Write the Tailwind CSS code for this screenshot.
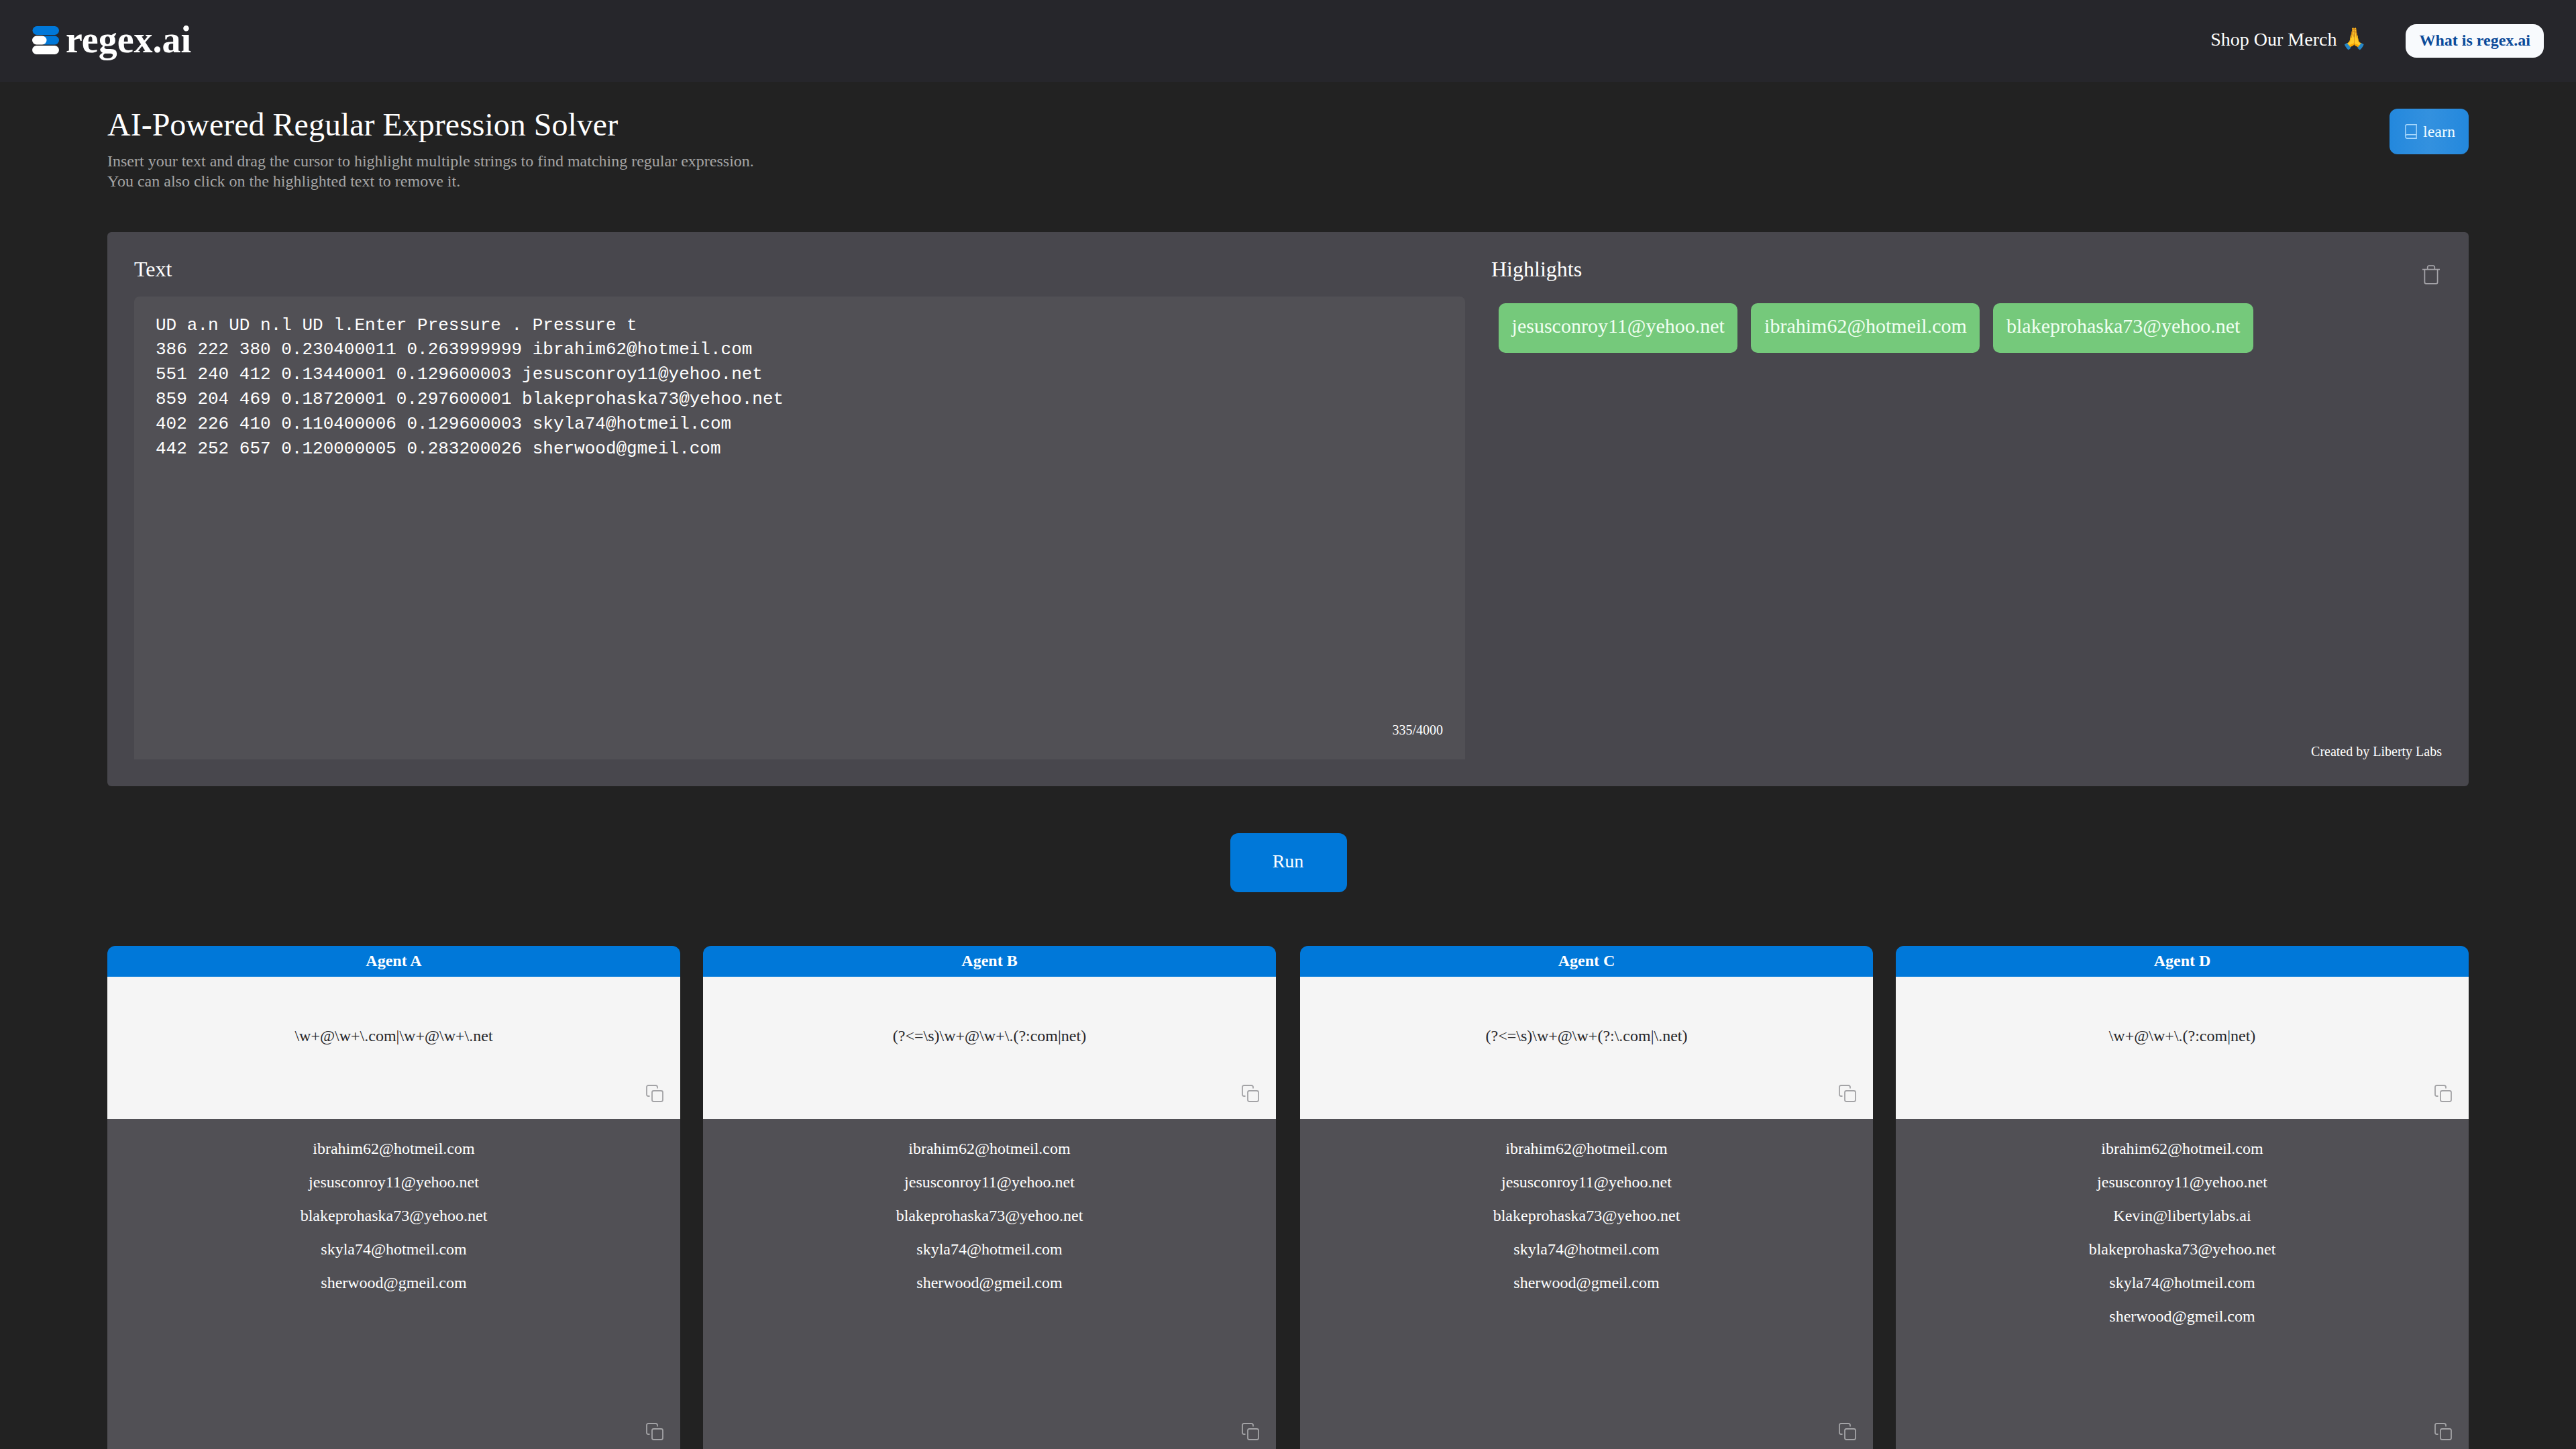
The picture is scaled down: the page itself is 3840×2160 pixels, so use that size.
<!DOCTYPE html>
<html lang="en">
<head>
  <meta charset="UTF-8">
  <title>regex.ai</title>
  <meta name="viewport" content="width=device-width, initial-scale=1.0">
  <script src="https://cdn.jsdelivr.net/npm/@tailwindcss/browser@4"></script>
</head>
<body class="bg-[#222222] text-white font-['Liberation_Serif',serif] h-[2160px] overflow-hidden">

  <!-- Navbar -->
  <header class="h-[122px] bg-[#26262b] flex items-center justify-between px-12">
    <div class="flex items-center gap-[10px]">
      <svg class="w-10 h-[42px] -mt-0.5" viewBox="0 0 40 42">
        <rect x="0.5" y="0" width="39.5" height="13" rx="6.5" fill="#0078d9"/>
        <rect x="12" y="14.5" width="28" height="13" rx="6.5" fill="#0078d9"/>
        <rect x="0" y="14.5" width="21.5" height="13" rx="6.5" fill="#fff"/>
        <rect x="0" y="29" width="40" height="13" rx="6.5" fill="#fff"/>
      </svg>
      <span class="text-[56px] leading-[56px] font-bold pb-1">regex.ai</span>
    </div>
    <div class="flex items-center gap-[57px]">
      <a class="text-[28px] leading-8 pb-[5px]">Shop Our Merch <span class="text-[31px] leading-none">🙏</span></a>
      <button class="h-[50px] px-5 pb-0.5 rounded-2xl bg-[#f8fafd] text-[#0b4a99] text-2xl leading-6 font-bold">What is regex.ai</button>
    </div>
  </header>

  <main class="px-40 pt-[34px]">
    <div class="flex justify-between items-start h-[190px]">
      <div>
        <h1 class="text-5xl leading-[60px]">AI-Powered Regular Expression Solver</h1>
        <p class="mt-[9px] text-2xl leading-[30px] text-[#a5a5a5]">
          Insert your text and drag the cursor to highlight multiple strings to find matching regular expression.<br>
          You can also click on the highlighted text to remove it.
        </p>
      </div>
      <button class="mt-1.5 w-[118px] h-[68px] pl-[3px] rounded-xl bg-linear-to-r from-[#2388dd] via-[#3391df] to-[#2388dd] flex items-center justify-center gap-[9px] text-2xl leading-6 text-[#eefaff]">
        <svg class="w-[18px] h-[22px]" viewBox="0 0 18 22" fill="none" stroke="#a9d8fb" stroke-width="1.4">
          <path d="M17.2 15.8V.8H3.2A2.4 2.4 0 0 0 .8 3.2v15.6a2.4 2.4 0 0 0 2.4 2.4h14v-5.4H3.2a2.4 2.4 0 0 0-2.4 2.4"/>
        </svg>
        learn
      </button>
    </div>

    <!-- Editor panel -->
    <section class="h-[826px] rounded-md bg-[#48474d] pl-10 pr-10 pt-[35px] pb-10 flex gap-[39px]">
      <div class="w-[1984px] flex flex-col">
        <h2 class="text-[32px] leading-10">Text</h2>
        <div class="mt-[21px] flex-1 rounded-t-lg bg-[#515055] px-8 pt-[24.6px] pb-8 flex flex-col justify-between">
          <pre class="font-['Liberation_Mono',monospace] text-[26px] leading-[36.8px]">UD a.n UD n.l UD l.Enter Pressure . Pressure t
386 222 380 0.230400011 0.263999999 ibrahim62@hotmeil.com
551 240 412 0.13440001 0.129600003 jesusconroy11@yehoo.net
859 204 469 0.18720001 0.297600001 blakeprohaska73@yehoo.net
402 226 410 0.110400006 0.129600003 skyla74@hotmeil.com
442 252 657 0.120000005 0.283200026 sherwood@gmeil.com</pre>
          <div class="pr-px text-right text-xl leading-6">335/4000</div>
        </div>
      </div>
      <div class="flex-1 flex flex-col">
        <div class="flex justify-between items-start">
          <h2 class="text-[32px] leading-10">Highlights</h2>
          <svg class="w-[26px] h-[29px] mt-[14px] mr-[3px]" viewBox="0 0 26 29" fill="none" stroke="#a6a5aa" stroke-width="1.7">
            <path d="M0 6.6h26M3.4 6.6v19.2a2 2 0 0 0 2 2h15.2a2 2 0 0 0 2-2V6.6M7.7 6.6V3.4a2.2 2.2 0 0 1 2.2-2.2h6.2a2.2 2.2 0 0 1 2.2 2.2v3.2"/>
          </svg>
        </div>
        <div class="mt-[28px] ml-[11px] flex gap-5 text-[30px] text-[#f0fff2]">
          <span class="h-[74px] px-[19.6px] rounded-[10px] bg-[#75c97b] leading-[68px]">jesusconroy11@yehoo.net</span>
          <span class="h-[74px] px-[19.6px] rounded-[10px] bg-[#75c97b] leading-[68px]">ibrahim62@hotmeil.com</span>
          <span class="h-[74px] px-[19.6px] rounded-[10px] bg-[#75c97b] leading-[68px]">blakeprohaska73@yehoo.net</span>
        </div>
        <div class="mt-auto text-right text-xl leading-6">Created by Liberty Labs</div>
      </div>
    </section>

    <div class="pt-[70px] pb-20 pl-[2px] flex justify-center">
      <button class="w-[174px] h-[88px] pb-[5px] pr-0.5 rounded-xl bg-[#0078d9] text-[28px] leading-8">Run</button>
    </div>

    <!-- Agent results -->
    <section id="agents" class="flex gap-[34px]"></section>
  </main>

  <script>
    const agents = [
      { name: 'Agent A', regex: String.raw`\w+@\w+\.com|\w+@\w+\.net`, matches: ['ibrahim62@hotmeil.com', 'jesusconroy11@yehoo.net', 'blakeprohaska73@yehoo.net', 'skyla74@hotmeil.com', 'sherwood@gmeil.com'] },
      { name: 'Agent B', regex: String.raw`(?<=\s)\w+@\w+\.(?:com|net)`, matches: ['ibrahim62@hotmeil.com', 'jesusconroy11@yehoo.net', 'blakeprohaska73@yehoo.net', 'skyla74@hotmeil.com', 'sherwood@gmeil.com'] },
      { name: 'Agent C', regex: String.raw`(?<=\s)\w+@\w+(?:\.com|\.net)`, matches: ['ibrahim62@hotmeil.com', 'jesusconroy11@yehoo.net', 'blakeprohaska73@yehoo.net', 'skyla74@hotmeil.com', 'sherwood@gmeil.com'] },
      { name: 'Agent D', regex: String.raw`\w+@\w+\.(?:com|net)`, matches: ['ibrahim62@hotmeil.com', 'jesusconroy11@yehoo.net', 'Kevin@libertylabs.ai', 'blakeprohaska73@yehoo.net', 'skyla74@hotmeil.com', 'sherwood@gmeil.com'] },
    ];

    const copyIcon = `
      <svg class="absolute right-[25px] bottom-[25px] w-[26px] h-[26px]" viewBox="0 0 26 26" fill="none" stroke="#a3a3a6" stroke-width="1.8">
        <rect x="9" y="9" width="16" height="16" rx="2.5"/>
        <path d="M5.5 17H3.5A2.5 2.5 0 0 1 1 14.5V3.5A2.5 2.5 0 0 1 3.5 1H14.5A2.5 2.5 0 0 1 17 3.5V5.5"/>
      </svg>`;

    document.getElementById('agents').innerHTML = agents.map(a => `
      <article class="w-[854px] nth-3:ml-0.5">
        <h3 class="h-[46px] rounded-t-xl bg-[#0078d9] text-center text-2xl leading-[44px] font-bold">${a.name}</h3>
        <div class="relative h-[212px] bg-[#f5f5f5] text-[#27272a] text-center text-2xl leading-[176px]">${a.regex.replace(/</g, '&lt;')}${copyIcon}</div>
        <div class="relative h-[504px] bg-[#515055] pt-[19px] text-center text-2xl leading-[50px]">${a.matches.map(m => `<p>${m}</p>`).join('')}${copyIcon}</div>
      </article>`).join('');
  </script>
</body>
</html>
